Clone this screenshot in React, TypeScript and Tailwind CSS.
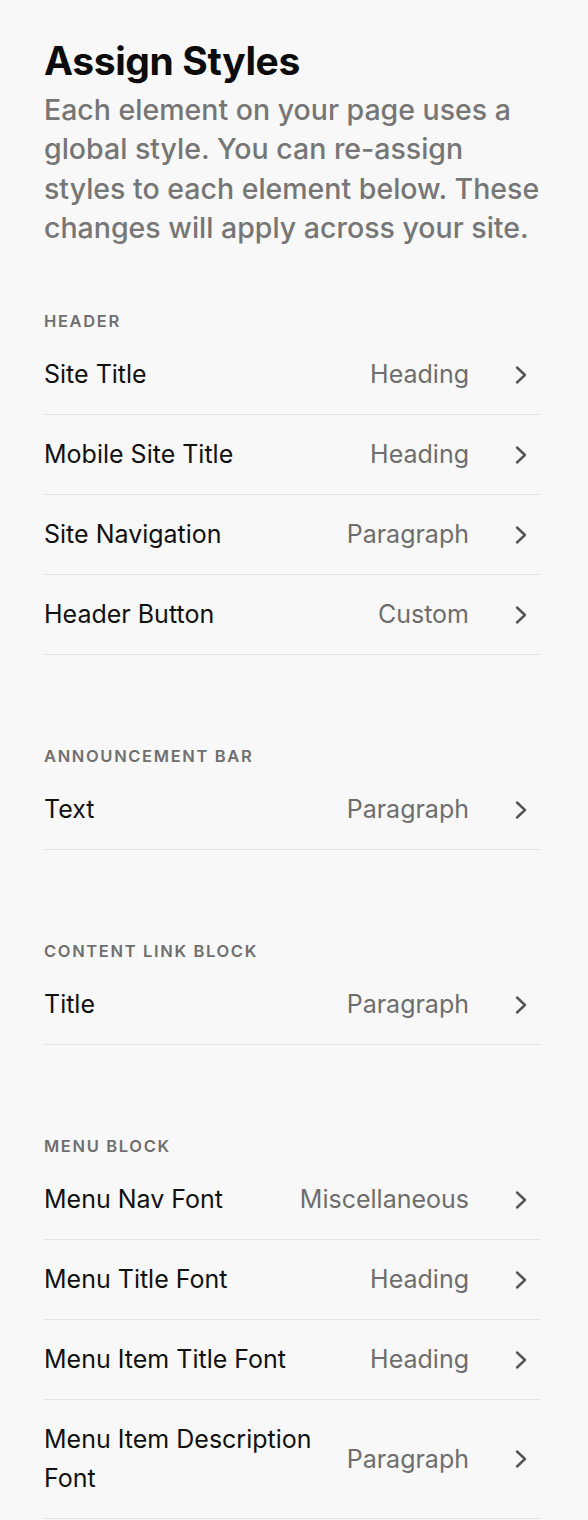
interface Row {
  name: string;
  value: string;
}

interface Section {
  title: string;
  rows: Row[];
}

const sections: Section[] = [
  {
    title: 'Header',
    rows: [
      { name: 'Site Title', value: 'Heading' },
      { name: 'Mobile Site Title', value: 'Heading' },
      { name: 'Site Navigation', value: 'Paragraph' },
      { name: 'Header Button', value: 'Custom' },
    ],
  },
  {
    title: 'Announcement Bar',
    rows: [{ name: 'Text', value: 'Paragraph' }],
  },
  {
    title: 'Content Link Block',
    rows: [{ name: 'Title', value: 'Paragraph' }],
  },
  {
    title: 'Menu Block',
    rows: [
      { name: 'Menu Nav Font', value: 'Miscellaneous' },
      { name: 'Menu Title Font', value: 'Heading' },
      { name: 'Menu Item Title Font', value: 'Heading' },
      { name: 'Menu Item Description Font', value: 'Paragraph' },
    ],
  },
];

function Chevron() {
  return (
    <svg
      viewBox="0 0 14 20"
      className="ml-[29px] mr-[13px] h-[20px] w-[14px] shrink-0"
      fill="none"
      stroke="#555555"
      strokeWidth={2.4}
      strokeLinecap="round"
      strokeLinejoin="round"
    >
      <polyline points="3,2.5 11,10 3,17.5" />
    </svg>
  );
}

function StyleRow({ row }: { row: Row }) {
  return (
    <button className="flex w-full items-center gap-4 border-b border-[#e4e4e4] py-[20px] text-left">
      <span className="flex-1 min-w-0 text-[25px] leading-[39px] text-[#111111]">{row.name}</span>
      <span className="shrink-0 text-[25px] leading-[39px] text-[#6e6e6e]">{row.value}</span>
      <Chevron />
    </button>
  );
}

export default function App() {
  return (
    <div className="min-h-[1520px] bg-[#f8f8f8] pl-[44px] pr-[47px] pt-[38px] font-['Inter','Liberation_Sans',sans-serif]">
      <h1 className="text-[39px] font-bold leading-[46px] tracking-[-0.01em] text-[#0c0c0c]">Assign Styles</h1>
      <p className="mt-[6px] text-[28.5px] font-medium leading-[39.3px] text-[#767676]">
        Each element on your page uses a global style. You can re-assign styles to each element below. These changes will apply across your site.
      </p>

      <div className="mt-[64px] flex flex-col gap-[91px]">
        {sections.map((section) => (
          <section key={section.title}>
            <h2 className="text-[16.5px] font-semibold uppercase leading-[20px] tracking-[0.1em] text-[#6f6f6f]">
              {section.title}
            </h2>
            <div className="mt-[4px]">
              {section.rows.map((row) => (
                <StyleRow key={row.name} row={row} />
              ))}
            </div>
          </section>
        ))}
      </div>
    </div>
  );
}
